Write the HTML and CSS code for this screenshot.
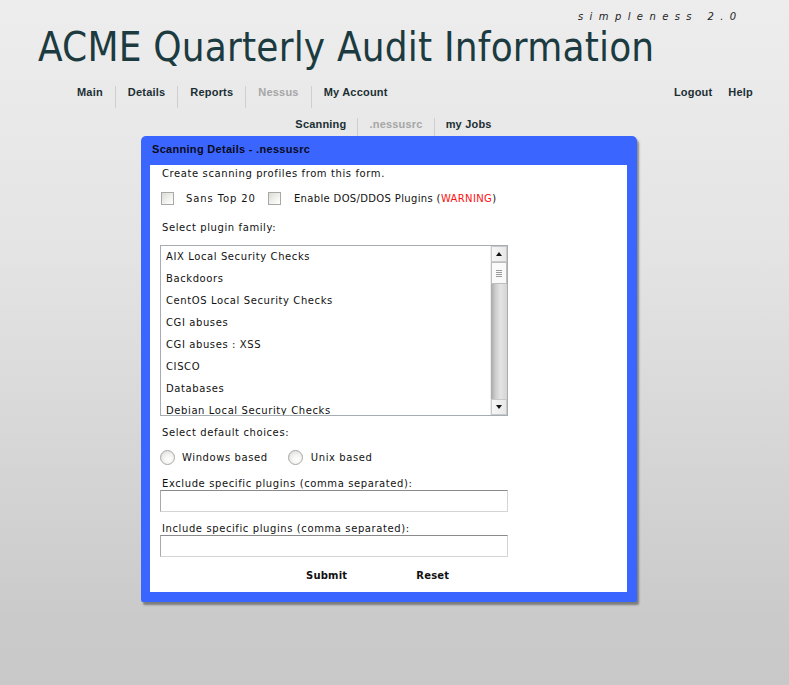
FILE: index.html
```html
<!DOCTYPE html>
<html>
<head>
<meta charset="utf-8">
<title>ACME Quarterly Audit Information</title>
<link rel="stylesheet" href="styles.css">
</head>
<body>
<div class="page">
  <header class="top">
    <div class="brand">simpleness 2.0</div>
    <h1 class="title">ACME Quarterly Audit Information</h1>
  </header>
  <nav class="mainnav">
    <ul class="navlist">
      <li><a class="navlink">Main</a></li>
      <li><a class="navlink">Details</a></li>
      <li><a class="navlink">Reports</a></li>
      <li><a class="navlink dim">Nessus</a></li>
      <li><a class="navlink">My Account</a></li>
    </ul>
    <ul class="navright">
      <li><a class="navlink">Logout</a></li>
      <li><a class="navlink">Help</a></li>
    </ul>
  </nav>
  <nav class="subnav">
    <ul class="navlist">
      <li><a class="navlink">Scanning</a></li>
      <li><a class="navlink dim">.nessusrc</a></li>
      <li><a class="navlink">my Jobs</a></li>
    </ul>
  </nav>
  <section class="panel">
    <h2 class="panel-head">Scanning Details - .nessusrc</h2>
    <form class="panel-body">
      <p class="line intro">Create scanning profiles from this form.</p>
      <div class="checks">
        <label class="opt"><input type="checkbox" class="cb"><span>Sans Top 20</span></label>
        <label class="opt"><input type="checkbox" class="cb"><span>Enable DOS/DDOS Plugins (<em class="warn">WARNING</em>)</span></label>
      </div>
      <p class="line lbl-family">Select plugin family:</p>
      <div class="listbox">
        <ul class="options">
          <li>AIX Local Security Checks</li>
          <li>Backdoors</li>
          <li>CentOS Local Security Checks</li>
          <li>CGI abuses</li>
          <li>CGI abuses : XSS</li>
          <li>CISCO</li>
          <li>Databases</li>
          <li>Debian Local Security Checks</li>
        </ul>
        <div class="scrollbar">
          <div class="sbtn"><span class="arr up"></span></div>
          <div class="thumb"><span class="grip"></span></div>
          <div class="track"></div>
          <div class="sbtn"><span class="arr down"></span></div>
        </div>
      </div>
      <p class="line lbl-default">Select default choices:</p>
      <div class="radios">
        <label class="opt"><input type="radio" name="os" class="rb"><span>Windows based</span></label>
        <label class="opt"><input type="radio" name="os" class="rb"><span>Unix based</span></label>
      </div>
      <label class="line fieldlbl">Exclude specific plugins (comma separated):</label>
      <input type="text" class="field">
      <label class="line fieldlbl second">Include specific plugins (comma separated):</label>
      <input type="text" class="field">
      <div class="buttons">
        <button type="button" class="btn">Submit</button>
        <button type="button" class="btn">Reset</button>
      </div>
    </form>
  </section>
</div>
</body>
</html>
```

FILE: styles.css
```css
html, body {
  margin: 0;
  padding: 0;
}
body {
  min-height: 685px;
  background: linear-gradient(to bottom, #ededed 0px, #e4e4e4 250px, #cacaca 620px, #c8c8c8 685px);
  font-family: "DejaVu Sans", Verdana, sans-serif;
  color: #111;
}
.page {
  height: 685px;
  overflow: hidden;
}
.top {
  position: relative;
  height: 77px;
}
.brand {
  position: absolute;
  top: 11px;
  left: 578px;
  font-family: "DejaVu Sans", sans-serif;
  font-style: italic;
  font-size: 10px;
  letter-spacing: 6.4px;
  color: #222;
}
.title {
  margin: 0;
  padding: 25px 0 0 38px;
  font-family: "DejaVu Sans Condensed", "DejaVu Sans", sans-serif;
  font-weight: normal;
  font-size: 40px;
  line-height: 44px;
  color: #1c3b40;
  letter-spacing: 0.2px;
}
.mainnav {
  display: flex;
  justify-content: space-between;
  padding: 9px 36px 0 65px;
  height: 22px;
}
.navlist, .navright {
  display: flex;
  list-style: none;
  margin: 0;
  padding: 0;
}
.navlist li + li {
  border-left: 1px solid #cfcfcf;
}
.navlink {
  display: block;
  padding: 0 12px;
  font-family: "Liberation Sans", Arial, sans-serif;
  font-weight: bold;
  font-size: 11px;
  line-height: 13px;
  letter-spacing: 0.2px;
  color: #1b2f33;
}
.navlink.dim {
  color: #a6a6a6;
}
.navright li .navlink {
  padding: 0 0 0 16px;
}
.subnav {
  display: flex;
  justify-content: center;
  padding: 10px 0 0 0;
  margin-left: -2px;
  height: 18px;
}
.subnav .navlink {
  padding: 0 11px;
}
.panel {
  margin-left: 141px;
  width: 496px;
  padding: 0 10px 10px 9px;
  box-sizing: border-box;
  background: #3a66ff;
  border-radius: 5px 5px 2px 2px;
  box-shadow: 2px 3px 2px rgba(60, 60, 60, 0.55);
}
.panel-head {
  margin: 0;
  padding: 0 2px;
  height: 29px;
  font-family: "Liberation Sans", Arial, sans-serif;
  font-weight: bold;
  font-size: 11px;
  line-height: 27px;
  letter-spacing: 0.3px;
  color: #0a0a1a;
}
.panel-body {
  display: flex;
  flex-direction: column;
  margin: 0;
  padding: 0 0 0 10px;
  background: #fff;
  height: 427px;
  font-size: 10px;
  letter-spacing: 0.6px;
}
.line {
  margin: 0;
  line-height: 14px;
}
.intro {
  margin-top: 2px;
  padding-left: 2px;
}
.checks, .radios {
  display: flex;
  align-items: center;
  gap: 0;
}
.checks {
  margin-top: 10px;
  height: 15px;
}
.opt {
  display: flex;
  align-items: center;
}
.cb {
  appearance: none;
  -webkit-appearance: none;
  margin: 0 0 0 1px;
  width: 13px;
  height: 13px;
  border: 1px solid #a8a8a8;
  background: linear-gradient(135deg, #dcdcd6 0%, #f6f6f3 70%, #ffffff 100%);
  box-sizing: border-box;
}
.checks .opt:first-child span {
  margin-left: 12px;
  margin-right: 11px;
  letter-spacing: 0.9px;
}
.checks .opt:last-child span {
  margin-left: 13px;
  letter-spacing: 0.35px;
}
.warn {
  font-style: normal;
  color: #ff1010;
}
.lbl-family {
  margin-top: 15px;
  padding-left: 2px;
}
.listbox {
  display: flex;
  margin-top: 10px;
  width: 348px;
  height: 171px;
  border: 1px solid #a5acb2;
  box-sizing: border-box;
  background: #fff;
  overflow: hidden;
}
.options {
  flex: 1;
  list-style: none;
  margin: 0;
  padding: 0;
  overflow: hidden;
}
.options li {
  height: 22px;
  line-height: 22px;
  padding-left: 5px;
  white-space: nowrap;
}
.scrollbar {
  width: 16px;
  display: flex;
  flex-direction: column;
  border-left: 1px solid #eee;
}
.sbtn {
  height: 16px;
  box-sizing: border-box;
  border: 1px solid #c9c9c9;
  background: linear-gradient(to right, #f6f6f6, #e8e8e8);
  display: flex;
  align-items: center;
  justify-content: center;
}
.arr {
  width: 0;
  height: 0;
  border-left: 3px solid transparent;
  border-right: 3px solid transparent;
}
.arr.up {
  border-bottom: 4px solid #111;
}
.arr.down {
  border-top: 4px solid #111;
}
.thumb {
  height: 22px;
  box-sizing: border-box;
  border: 1px solid #bdbdbd;
  background: #fafafa;
  display: flex;
  align-items: center;
  justify-content: center;
}
.grip {
  width: 6px;
  height: 7px;
  background: repeating-linear-gradient(to bottom, #9a9a9a 0 1px, transparent 1px 2px);
}
.track {
  flex: 1;
  background: linear-gradient(to right, #a9a9a9 0%, #cfcfcf 30%, #e4e4e4 60%, #d4d4d4 100%);
}
.lbl-default {
  margin-top: 10px;
  padding-left: 2px;
}
.radios {
  margin-top: 9px;
  height: 16px;
}
.rb {
  appearance: none;
  -webkit-appearance: none;
  margin: 0;
  width: 15px;
  height: 15px;
  border-radius: 50%;
  border: 1px solid #a8a8a8;
  background: radial-gradient(circle at 60% 65%, #ffffff 0%, #f4f4f2 40%, #d6d6d2 100%);
  box-sizing: border-box;
}
.radios .opt:first-child span {
  margin-left: 7px;
  margin-right: 20px;
}
.radios .opt:last-child span {
  margin-left: 8px;
}
.fieldlbl {
  display: block;
  margin-top: 13px;
  padding-left: 2px;
  line-height: 12px;
}
.fieldlbl.second {
  margin-top: 11px;
}
.field {
  margin: 0;
  width: 348px;
  height: 22px;
  box-sizing: border-box;
  border: 1px solid #a9a9a9;
  border-top-color: #8a8a8a;
  border-right-color: #d4d4d4;
  border-bottom-color: #d4d4d4;
  background: #fff;
  padding: 0;
}
.buttons {
  display: flex;
  margin-top: 12px;
  padding-left: 146px;
  gap: 69px;
}
.btn {
  border: 0;
  background: none;
  padding: 0;
  font-family: "DejaVu Sans", Verdana, sans-serif;
  font-weight: bold;
  font-size: 10px;
  line-height: 14px;
  letter-spacing: 0.2px;
  color: #111;
}
```
